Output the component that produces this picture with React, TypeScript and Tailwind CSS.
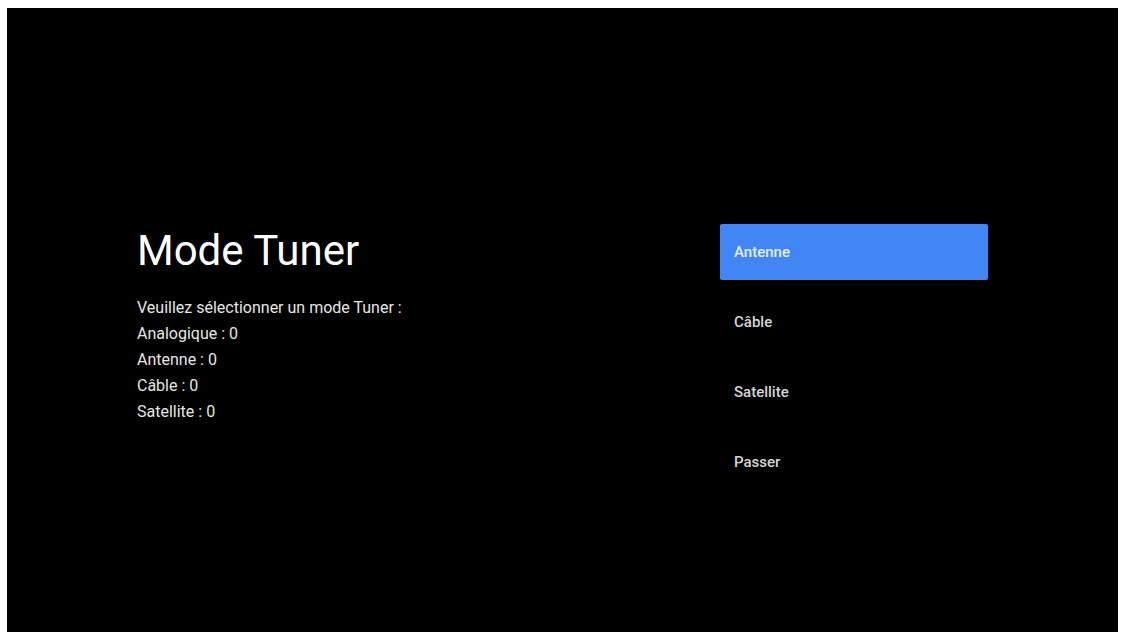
const COUNTS = [
  'Veuillez sélectionner un mode Tuner :',
  'Analogique : 0',
  'Antenne : 0',
  'Câble : 0',
  'Satellite : 0',
];

const OPTIONS = ['Antenne', 'Câble', 'Satellite', 'Passer'];

export default function App() {
  return (
    <div className="h-[632px] w-[1121px] overflow-hidden bg-white pl-[7px] pr-[3px] pt-[8px] font-['Roboto',sans-serif]">
      <div className="flex h-full bg-black">
        <div className="w-[713px] shrink-0 pl-[130px] pt-[215px]">
          <h1 className="text-[42px] leading-[56px] text-white">Mode Tuner</h1>
          <div className="mt-[16px] text-[16px] leading-[26px] text-[#e6e6e6]">
            {COUNTS.map((l) => (
              <div key={l}>{l}</div>
            ))}
          </div>
        </div>
        <div className="flex flex-col gap-[14px] pt-[216px]">
          {OPTIONS.map((o, i) => (
            <div
              key={o}
              className={
                i === 0
                  ? 'flex h-[56px] w-[268px] items-center rounded-[2px] bg-[#4285f4] px-[14px] text-[15px] font-medium text-[#e8f0fe]'
                  : 'flex h-[56px] w-[268px] items-center px-[14px] text-[15px] font-medium text-[#d6d6d6]'
              }
            >
              {o}
            </div>
          ))}
        </div>
      </div>
    </div>
  );
}
